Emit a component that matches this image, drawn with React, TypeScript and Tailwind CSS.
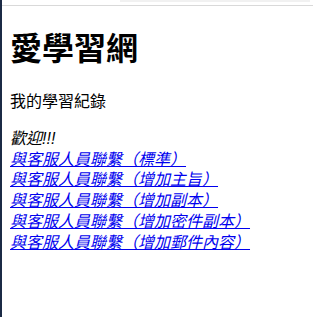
import React from "react";

const links = [
  "與客服人員聯繫（標準）",
  "與客服人員聯繫（增加主旨）",
  "與客服人員聯繫（增加副本）",
  "與客服人員聯繫（增加密件副本）",
  "與客服人員聯繫（增加郵件內容）",
];

export default function App() {
  return (
    <div
      className="flex min-h-[317px] w-[313px] bg-white text-black"
      style={{ fontFamily: '"Liberation Sans", "Noto Sans CJK TC", sans-serif' }}
    >
      <div className="w-[2px] shrink-0 bg-[#1b2a45]" />
      <div className="flex-1 flex flex-col">
        <div className="h-[2px] flex">
          <div className="ml-[118px] w-[190px] bg-[#f1f1f1]" />
        </div>
        <div className="h-[3px]" />
        <div className="h-px bg-[#d9d9d9]" />
        <div className="pl-[8px] pt-[23.4px]">
          <h1 className="text-[32px] font-bold leading-[41.6px] mb-[21.4px]">愛學習網</h1>
          <p className="text-[16px] leading-[20.7px] mb-[16px]">我的學習紀錄</p>
          <div className="text-[16px] leading-[20.7px] italic">
            <div>歡迎!!!</div>
            {links.map((t) => (
              <div key={t}>
                <a href="#" className="text-[#0000ee] underline">
                  {t}
                </a>
              </div>
            ))}
          </div>
        </div>
      </div>
    </div>
  );
}
